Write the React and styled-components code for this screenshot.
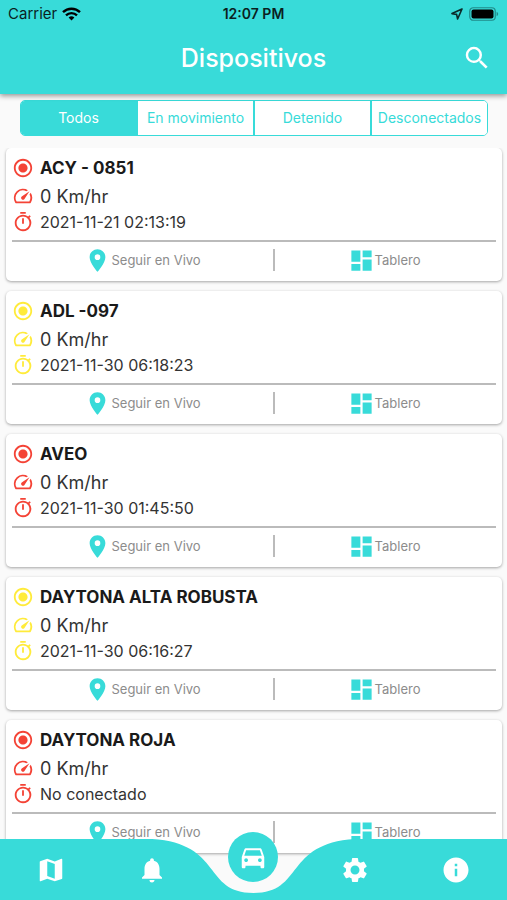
import React, { useState } from 'react';
import styled, { createGlobalStyle } from 'styled-components';
import {
  MdSearch,
  MdRadioButtonChecked,
  MdSpeed,
  MdOutlineTimer,
  MdLocationOn,
  MdDashboard,
  MdMap,
  MdNotifications,
  MdDirectionsCar,
  MdSettings,
  MdInfo,
} from 'react-icons/md';

const TEAL = '#38dbd9';
const RED = '#f44336';
const YELLOW = '#ffeb3b';

const GlobalStyle = createGlobalStyle`
  * {
    box-sizing: border-box;
  }
  body {
    margin: 0;
    background-color: #fafafa;
    font-family: Inter, "Open Sans", sans-serif;
  }
  button {
    font-family: inherit;
    border: none;
    padding: 0;
    background: none;
    cursor: pointer;
  }
`;

const Page = styled.div`
  display: flex;
  flex-direction: column;
  height: 100vh;
`;

const Header = styled.header`
  background-color: ${TEAL};
  box-shadow: 0 2px 5px rgba(0, 0, 0, 0.4);
  z-index: 1;
`;

const StatusBar = styled.div`
  display: grid;
  grid-template-columns: 1fr auto 1fr;
  align-items: center;
  height: 27px;
  padding: 0 8px;
  color: #0b1f1f;
  font-size: 15px;
`;

const StatusLeft = styled.div`
  display: flex;
  align-items: center;
  gap: 5px;
`;

const Clock = styled.div`
  font-size: 14px;
  font-weight: 600;
`;

const StatusRight = styled.div`
  display: flex;
  align-items: center;
  justify-content: flex-end;
  gap: 6px;
`;

const TitleBar = styled.div`
  display: grid;
  grid-template-columns: 1fr auto 1fr;
  align-items: center;
  height: 67px;
  padding: 0 15px 5px;
`;

const Title = styled.h1`
  grid-column: 2;
  margin: 0;
  color: white;
  font-size: 25px;
  font-weight: 500;
`;

const SearchButton = styled.button`
  display: flex;
  justify-self: end;
  color: white;
  font-size: 30px;
`;

const Tabs = styled.div`
  display: flex;
  flex-shrink: 0;
  height: 36px;
  margin: 6px 19px 12px 20px;
  border: 1px solid ${TEAL};
  border-radius: 5px;
  overflow: hidden;
`;

const Tab = styled.button`
  flex: 1 1 0;
  min-width: 0;
  padding-bottom: 2px;
  font-size: 14px;
  white-space: nowrap;
  color: ${(props) => (props.$active ? 'white' : TEAL)};
  background-color: ${(props) => (props.$active ? TEAL : 'white')};
  & + & {
    border-left: 2px solid ${TEAL};
  }
`;

const List = styled.main`
  flex: 1;
  display: flex;
  flex-direction: column;
  gap: 10px;
  padding: 0 5px 72px 6px;
  overflow-y: auto;
  scrollbar-width: none;
`;

const Card = styled.article`
  flex-shrink: 0;
  padding: 6px 6px 1px;
  background-color: white;
  border-radius: 5px;
  box-shadow: 0 1px 3px rgba(0, 0, 0, 0.35);
`;

const Line = styled.div`
  display: flex;
  align-items: center;
  gap: 6px;
  height: ${(props) => (props.$short ? 24 : 28)}px;
  color: #333;
  font-size: ${(props) => (props.$short ? 16 : 18)}px;
  svg {
    color: ${(props) => props.$color};
    font-size: 22px;
  }
`;

const Name = styled.h2`
  margin: 0;
  color: #1a1a1a;
  font-size: 17px;
  font-weight: 700;
`;

const Actions = styled.div`
  display: flex;
  align-items: center;
  justify-content: space-evenly;
  height: 40px;
  margin-top: 6px;
  padding: 0 3px 2px 0;
  border-top: 2px solid #bbb;
`;

const Action = styled.button`
  display: flex;
  align-items: center;
  color: #8c8c8c;
  font-size: 13px;
  svg {
    color: ${TEAL};
    font-size: 27px;
  }
`;

const Divider = styled.div`
  width: 2px;
  height: 22px;
  background-color: #bbb;
`;

const BottomNav = styled.nav`
  position: fixed;
  left: 0;
  right: 0;
  bottom: 0;
  z-index: 2;
  height: 61px;
`;

// the bar with the dip under the current item
const NavShape = styled.svg`
  position: absolute;
  width: 100%;
  height: 100%;
`;

const NavItems = styled.div`
  position: relative;
  display: grid;
  grid-template-columns: repeat(5, 1fr);
  align-items: center;
  justify-items: center;
  height: 100%;
`;

const NavButton = styled.button`
  display: flex;
  color: white;
  font-size: 30px;
`;

const CurrentButton = styled(NavButton)`
  align-items: center;
  justify-content: center;
  align-self: start;
  width: 50px;
  height: 50px;
  margin-top: -7px;
  border-radius: 50%;
  background-color: ${TEAL};
`;

const filters = ['Todos', 'En movimiento', 'Detenido', 'Desconectados'];

const devices = [
  { name: 'ACY - 0851', speed: '0 Km/hr', date: '2021-11-21 02:13:19', color: RED },
  { name: 'ADL -097', speed: '0 Km/hr', date: '2021-11-30 06:18:23', color: YELLOW },
  { name: 'AVEO', speed: '0 Km/hr', date: '2021-11-30 01:45:50', color: RED },
  { name: 'DAYTONA ALTA ROBUSTA', speed: '0 Km/hr', date: '2021-11-30 06:16:27', color: YELLOW },
  { name: 'DAYTONA ROJA', speed: '0 Km/hr', date: 'No conectado', color: RED },
];

const WifiIcon = () => (
  <svg width="19" height="14" viewBox="0 0 19 14" fill="none" stroke="#000" strokeWidth="2.4">
    <path d="M1 5.2a12.2 12.2 0 0 1 17 0" />
    <path d="M4 8.4a7.9 7.9 0 0 1 11 0" />
    <path d="M9.5 13.6 6.6 10.6a4.2 4.2 0 0 1 5.8 0z" fill="#000" stroke="none" />
  </svg>
);

const ArrowIcon = () => (
  <svg width="12" height="12" viewBox="0 0 12 12" fill="none" stroke="#0b2a2a" strokeWidth="1.6" strokeLinejoin="round">
    <path d="M11 1 1 5.6l4.6.8L6.6 11z" />
  </svg>
);

const BatteryIcon = () => (
  <svg width="30" height="14" viewBox="0 0 30 14">
    <rect x="0.75" y="0.75" width="25.5" height="12.5" rx="3.5" fill="none" stroke="#218a89" strokeWidth="1.2" />
    <rect x="2.5" y="2.5" width="22" height="9" rx="2" fill="#000" />
    <path d="M27.6 4.8q1.6.7 1.6 2.2t-1.6 2.2z" fill="#218a89" />
  </svg>
);

const DeviceCard = ({ device }) => (
  <Card>
    <Line $color={device.color}>
      <MdRadioButtonChecked />
      <Name>{device.name}</Name>
    </Line>
    <Line $color={device.color}>
      <MdSpeed />
      {device.speed}
    </Line>
    <Line $color={device.color} $short>
      <MdOutlineTimer />
      {device.date}
    </Line>
    <Actions>
      <Action>
        <MdLocationOn />
        Seguir en Vivo
      </Action>
      <Divider />
      <Action>
        <MdDashboard />
        Tablero
      </Action>
    </Actions>
  </Card>
);

const App = () => {
  const [filter, setFilter] = useState('Todos');

  return (
    <Page>
      <GlobalStyle />
      <Header>
        <StatusBar>
          <StatusLeft>
            Carrier
            <WifiIcon />
          </StatusLeft>
          <Clock>12:07 PM</Clock>
          <StatusRight>
            <ArrowIcon />
            <BatteryIcon />
          </StatusRight>
        </StatusBar>
        <TitleBar>
          <Title>Dispositivos</Title>
          <SearchButton aria-label="Buscar">
            <MdSearch />
          </SearchButton>
        </TitleBar>
      </Header>
      <Tabs>
        {filters.map((item) => (
          <Tab key={item} $active={item === filter} onClick={() => setFilter(item)}>
            {item}
          </Tab>
        ))}
      </Tabs>
      <List>
        {devices.map((device) => (
          <DeviceCard key={device.name} device={device} />
        ))}
      </List>
      <BottomNav>
        <NavShape viewBox="0 0 500 61" preserveAspectRatio="none">
          <path
            fill={TEAL}
            d="M0 0H150C220 4.5 200 54 250 54C300 54 280 4.5 350 0H500V61H0Z"
          />
        </NavShape>
        <NavItems>
          <NavButton aria-label="Mapa"><MdMap /></NavButton>
          <NavButton aria-label="Alertas"><MdNotifications /></NavButton>
          <CurrentButton aria-label="Dispositivos"><MdDirectionsCar /></CurrentButton>
          <NavButton aria-label="Ajustes"><MdSettings /></NavButton>
          <NavButton aria-label="Info"><MdInfo /></NavButton>
        </NavItems>
      </BottomNav>
    </Page>
  );
};

export default App;
